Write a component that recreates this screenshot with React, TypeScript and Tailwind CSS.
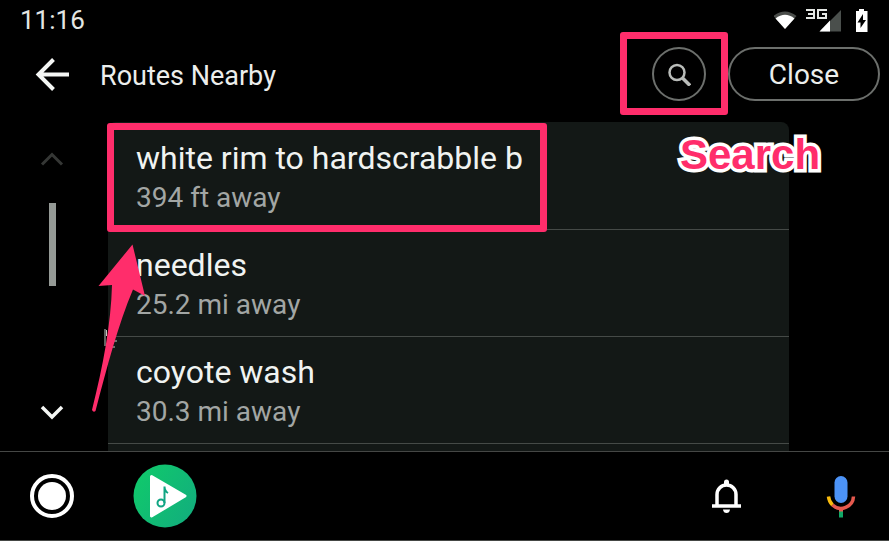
import type { ReactNode } from "react";

const routes = [
  { name: "white rim to hardscrabble b", distance: "394 ft away", highlighted: true },
  { name: "needles", distance: "25.2 mi away" },
  { name: "coyote wash", distance: "30.3 mi away" },
];

function Highlight({ className }: { className: string }) {
  return (
    <span
      aria-hidden="true"
      className={`pointer-events-none absolute rounded-[3px] border-[7px] border-[#ff2d6b] ${className}`}
    />
  );
}

function StatusBar() {
  return (
    <div className="flex h-10 shrink-0 items-center justify-between pl-5 pr-[21px]">
      <time className="text-[26px] leading-10 text-[#e3e6e3]">11:16</time>
      <svg width="94" height="24" viewBox="774 6 94 24" aria-hidden="true">
        <path d="M773.500 14Q785 5 796.500 14L785 27Z" fill="#4a4d4a" />
        <path d="M775.500 16.500Q785 9 794.500 16.500L785 27Z" fill="#fff" />
        <path
          d="M806 8H814V16H806M808 12H814M827 8H818V16H826V12H822"
          fill="none"
          stroke="#e3e6e3"
          strokeWidth="2"
        />
        <path d="M841 8V29.500H819.500Z" fill="#4a4f4c" />
        <path d="M830 18.500V29.500H819.500Z" fill="#fff" />
        <path d="M859 7H864V9H867.500V30H856V9H859Z" fill="#fff" />
        <path d="M863 12L857.500 20.500H860.500V26L866 18H863Z" fill="#000" />
      </svg>
    </div>
  );
}

function Header() {
  return (
    <header className="flex h-[82px] shrink-0 items-start pl-8 pr-[9px]">
      <button type="button" aria-label="Back" className="mt-[14px] size-10">
        <svg width="40" height="40" viewBox="0 0 40 40" fill="none" stroke="#f4f6f4" strokeWidth="4" aria-hidden="true">
          <path d="M37 20.500H7M21.500 5.500L6.500 20.500L21.500 35.500" />
        </svg>
      </button>
      <h1 className="ml-7 mt-4 text-[27px] leading-10 text-[#eceeec]">Routes Nearby</h1>
      <div className="relative ml-auto mr-[22px] mt-[7px]">
        <button
          type="button"
          aria-label="Search routes"
          className="flex size-[54px] items-center justify-center rounded-full border-2 border-[#6c6f6c]"
        >
          <svg width="24" height="24" viewBox="0 0 24 24" fill="none" stroke="#b9bcb9" aria-hidden="true">
            <circle cx="10" cy="10.500" r="7.500" strokeWidth="2.500" />
            <path d="M15.500 16L23 23.500" strokeWidth="3.500" />
          </svg>
        </button>
        <Highlight className="-left-8 -right-[22px] -top-[15px] -bottom-[14px]" />
        <span
          aria-hidden="true"
          className="pointer-events-none absolute left-7 top-[86px] z-10 font-['Liberation_Sans',Arial,sans-serif] text-[42px] leading-[44px] font-bold text-[#ff2d6b] [-webkit-text-stroke:7px_white] [paint-order:stroke_fill] [stroke-linejoin:round]"
        >
          Search
        </span>
      </div>
      <button
        type="button"
        className="mt-[7px] h-[54px] w-[152px] rounded-full border-2 border-[#6c6f6c] pt-0.5 text-[28px] leading-10 text-[#eceeec]"
      >
        Close
      </button>
    </header>
  );
}

function Scroller() {
  return (
    <div className="flex w-[108px] shrink-0 flex-col items-start pl-10 pt-[29px] pb-[31px]">
      <button type="button" aria-label="Scroll up" className="h-4 w-6">
        <svg width="24" height="16" viewBox="0 0 24 16" fill="none" stroke="#353735" strokeWidth="3" aria-hidden="true">
          <path d="M2 13.500L12 3.500L22 13.500" />
        </svg>
      </button>
      <div className="ml-[9px] mt-9 h-[83px] w-[7px] bg-[#959a96]" />
      <button type="button" aria-label="Scroll down" className="mt-auto h-4 w-6">
        <svg width="24" height="16" viewBox="0 0 24 16" fill="none" stroke="#f4f6f4" strokeWidth="3.500" aria-hidden="true">
          <path d="M2 3L12 13L22 3" />
        </svg>
      </button>
    </div>
  );
}

function RouteList() {
  return (
    <ul className="mr-[100px] min-w-0 flex-1 rounded-t-lg bg-[#131816] pt-px">
      {routes.map((route) => (
        <li key={route.name} className="relative h-[107px] border-b border-[#454a47]">
          <button type="button" className="block w-full px-7 pt-[15px] text-left">
            <span className="block text-[32px] leading-10 text-[#f0f3f1]">{route.name}</span>
            <span className="block text-[28px] leading-10 text-[#a2a6a4]">{route.distance}</span>
          </button>
          {route.highlighted && <Highlight className="-left-px top-0 -bottom-[3px] w-[440px]" />}
        </li>
      ))}
    </ul>
  );
}

function PointerArrow() {
  return (
    <svg
      className="pointer-events-none absolute left-[90px] top-[120px]"
      width="60"
      height="172"
      viewBox="90 242 60 172"
      aria-hidden="true"
    >
      <path
        d="M105 329V346M106.500 330V336M114 341H117M112 347H115"
        stroke="#c4c8c4"
        strokeWidth="1"
        fill="none"
      />
      <path
        d="M132.500 244.500L145 296L133 289.500C118 325 107 367 95.500 411Q93.500 413 92 410C103 366 111 324 112 285L98.500 286Z"
        fill="#ff2d6b"
      />
    </svg>
  );
}

function NavButton({ label, className, children }: { label: string; className: string; children: ReactNode }) {
  return (
    <button type="button" aria-label={label} className={`flex items-center justify-center ${className}`}>
      {children}
    </button>
  );
}

function NavBar() {
  return (
    <nav className="flex h-[90px] shrink-0 items-center border-y border-[#454745] pl-[29px] pr-8">
      <NavButton label="Home" className="size-[46px]">
        <svg width="46" height="46" viewBox="0 0 46 46" aria-hidden="true">
          <circle cx="23" cy="23" r="20" fill="none" stroke="#fff" strokeWidth="4" />
          <circle cx="23" cy="23" r="14" fill="#fff" />
        </svg>
      </NavButton>
      <NavButton label="Music" className="ml-[58px] size-16">
        <svg width="64" height="64" viewBox="0 0 64 64" aria-hidden="true">
          <defs>
            <linearGradient id="disc" x1="0" y1="0.200" x2="1" y2="0.800">
              <stop offset="0" stopColor="#10c96b" />
              <stop offset="1" stopColor="#12ae7d" />
            </linearGradient>
          </defs>
          <circle cx="32" cy="32" r="31.500" fill="url(#disc)" />
          <path d="M18.500 12.500L52 32L18.500 52Z" fill="#fff" stroke="#fff" strokeWidth="3" strokeLinejoin="round" />
          <circle cx="28" cy="39" r="3.500" fill="none" stroke="#10a583" strokeWidth="2" />
          <path d="M31.500 39V22.500Q31.500 27 35 29" fill="none" stroke="#10a583" strokeWidth="2" />
        </svg>
      </NavButton>
      <NavButton label="Notifications" className="ml-auto mr-[82px] size-[34px]">
        <svg width="34" height="34" viewBox="0 0 34 34" fill="none" stroke="#fff" aria-hidden="true">
          <path d="M8 27V15.500A9.500 9.500 0 0 1 27 15.500V27" strokeWidth="3.500" />
          <path d="M3 27H32" strokeWidth="3.500" />
          <path d="M15 5V3A2.500 2.500 0 0 1 20 3V5Z" fill="#fff" stroke="none" />
          <path d="M14 30.500H21Q20.500 34 17.500 34T14 30.500Z" fill="#fff" stroke="none" />
        </svg>
      </NavButton>
      <NavButton label="Voice search" className="h-12 w-8">
        <svg width="32" height="48" viewBox="0 0 32 48" fill="none" aria-hidden="true">
          <rect x="9.500" y="4" width="13" height="27" rx="6.500" fill="#4c93f7" />
          <path d="M3.500 24.500Q4 29.500 7.500 33" stroke="#f9bb0d" strokeWidth="3.500" />
          <path d="M7.500 33A12.500 12.500 0 0 0 28.500 24.500" stroke="#e5594e" strokeWidth="3.500" />
          <path d="M16 37V40" stroke="#e5594e" strokeWidth="4" />
          <path d="M16 39.500V45.500" stroke="#11a866" strokeWidth="4" />
        </svg>
      </NavButton>
    </nav>
  );
}

export default function App() {
  return (
    <div className="flex h-screen flex-col overflow-hidden bg-black font-[Roboto,sans-serif]">
      <StatusBar />
      <Header />
      <main className="relative flex min-h-0 flex-1 overflow-hidden">
        <Scroller />
        <RouteList />
        <PointerArrow />
      </main>
      <NavBar />
    </div>
  );
}
